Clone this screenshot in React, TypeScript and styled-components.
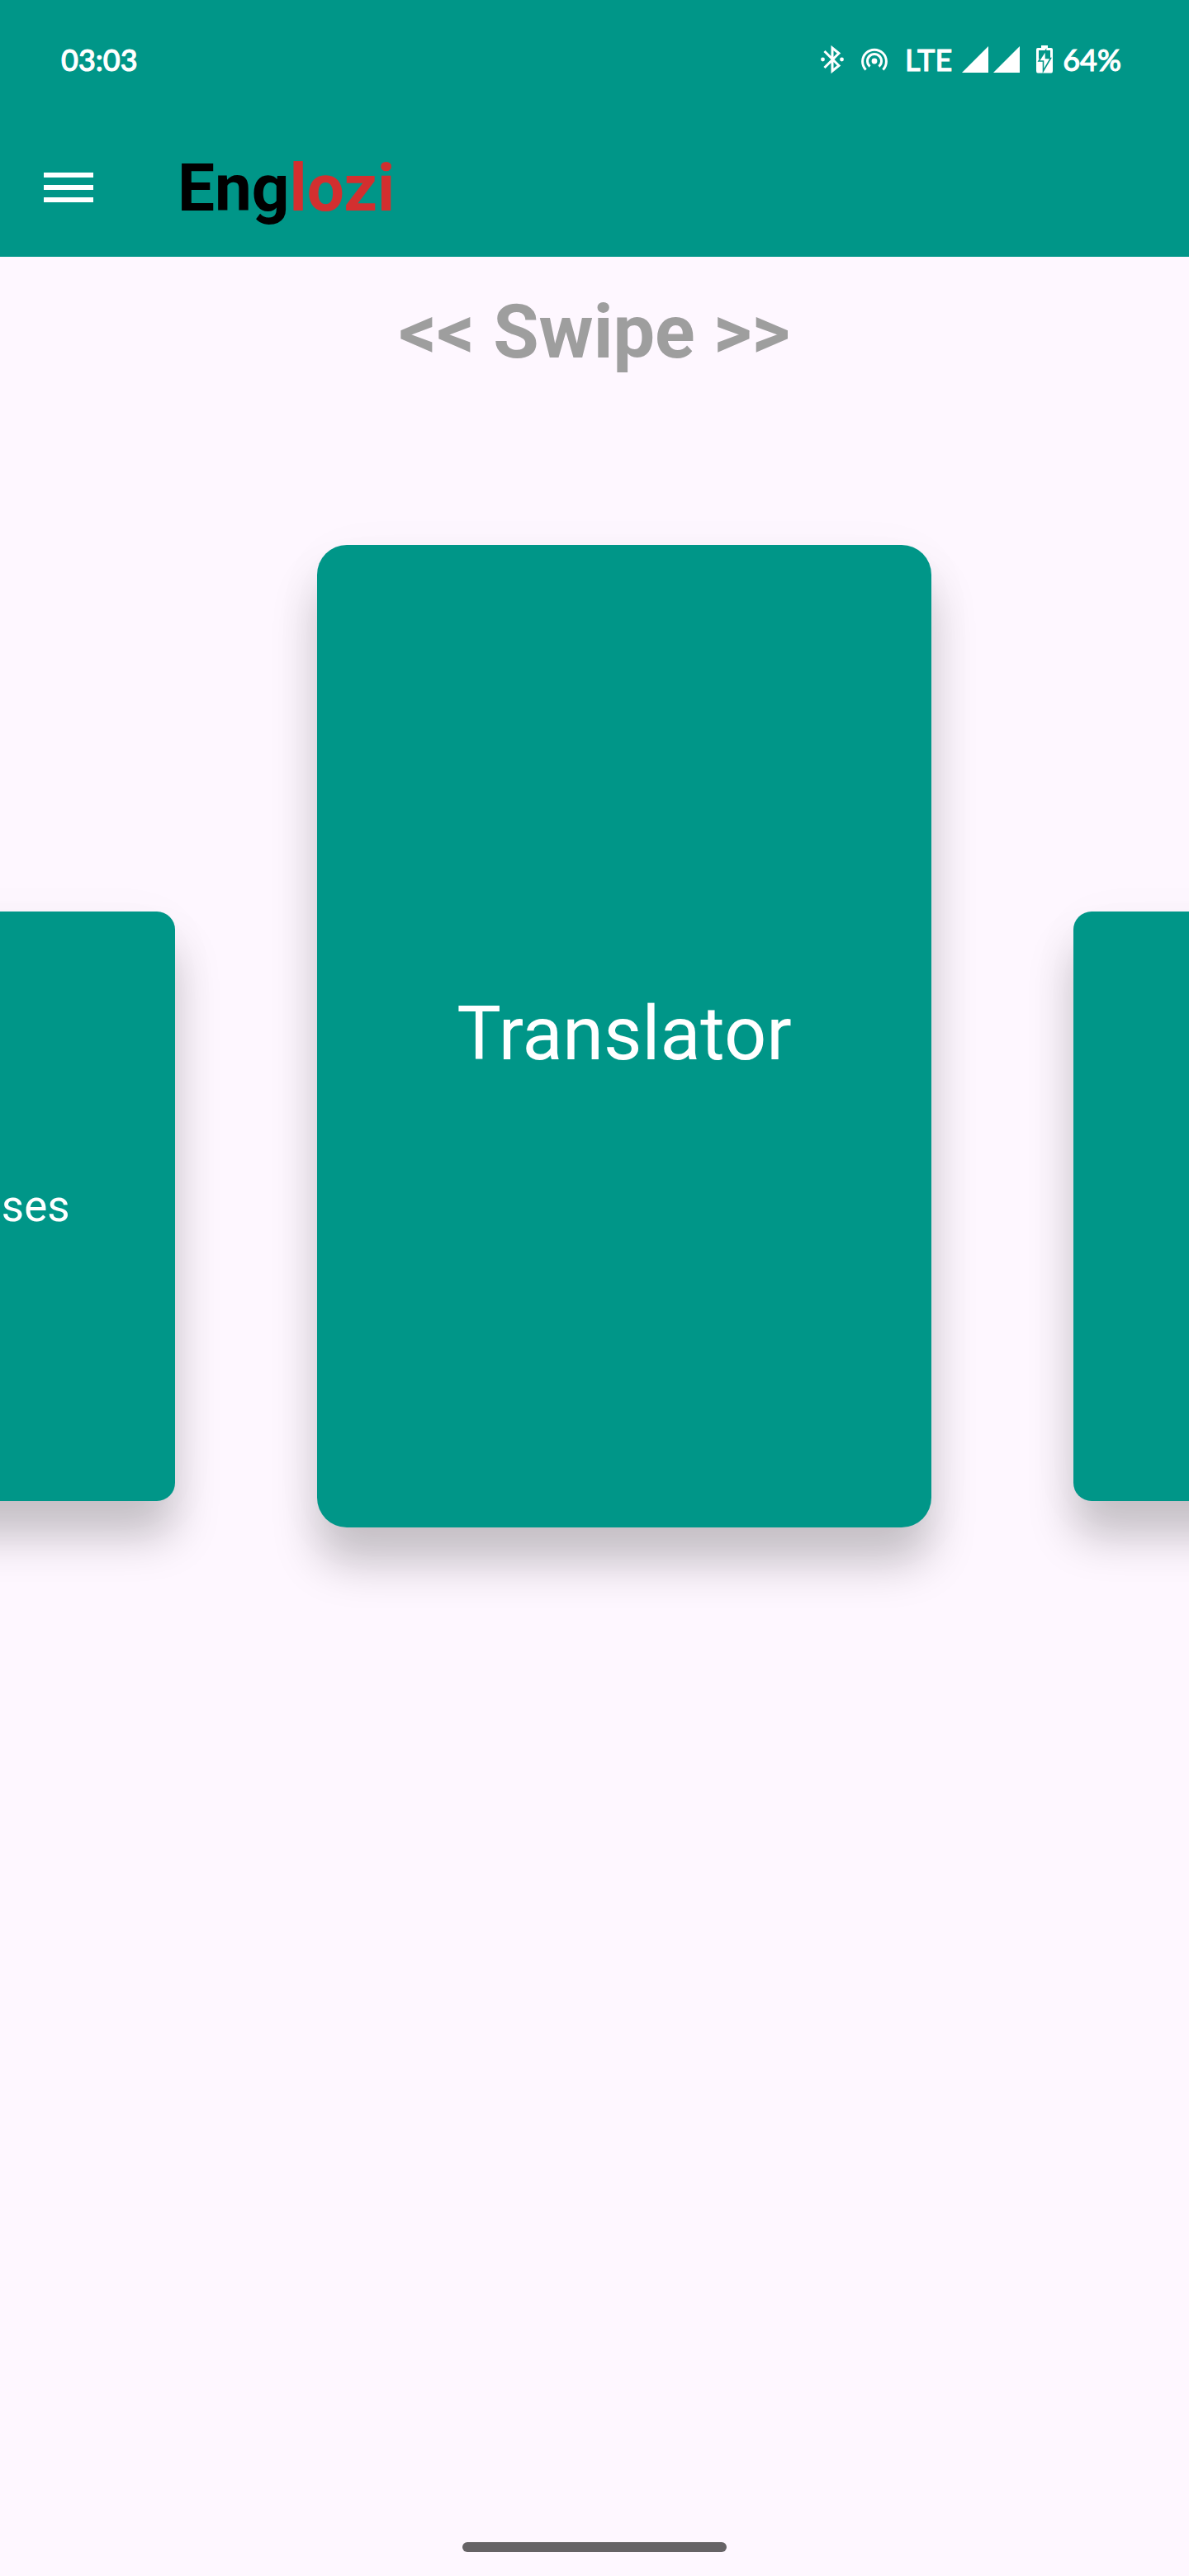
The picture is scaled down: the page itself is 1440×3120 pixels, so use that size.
import React from "react";
import styled, { createGlobalStyle } from "styled-components";

const teal = "#009688";
const surface = "#fef7ff";

const GlobalStyle = createGlobalStyle`
  *, *::before, *::after { box-sizing: border-box; }
  body {
    margin: 0;
    background: ${surface};
    font-family: Roboto, "Liberation Sans", sans-serif;
  }
`;

const Screen = styled.div`
  display: flex;
  flex-direction: column;
  min-height: 100vh;
  overflow: hidden;
  background: ${surface};
`;

const Header = styled.header`
  background: ${teal};
`;

const StatusBar = styled.div`
  display: flex;
  align-items: center;
  justify-content: space-between;
  height: 144px;
  padding: 0 82px 0 74px;
  color: #fff;
  font-family: Lato, "Open Sans", sans-serif;
  font-size: 36px;
  font-weight: 500;
  line-height: 44px;
  -webkit-text-stroke: 1px #fff;
`;

const StatusGroup = styled.div<{ $gap: number }>`
  display: flex;
  align-items: center;
  gap: ${({ $gap }) => $gap}px;
`;

const Glyph = styled.svg`
  display: block;
  flex: none;
`;

const AppBar = styled.div`
  display: flex;
  align-items: center;
  gap: 102px;
  height: 167px;
  padding: 0 53px;
`;

const MenuButton = styled.button`
  display: block;
  padding: 0;
  border: 0;
  background: none;
  cursor: pointer;
`;

const Title = styled.h1`
  margin: 0;
  color: #000;
  font-size: 80px;
  font-weight: 700;
  line-height: 94px;
`;

const TitleAccent = styled.span`
  color: #d32f2f;
`;

const Main = styled.main`
  display: flex;
  flex: 1;
  flex-direction: column;
  padding-top: 40px;
`;

const SwipeHint = styled.p`
  margin: 0;
  color: #9e9e9e;
  font-size: 90px;
  font-weight: 700;
  line-height: 104px;
  text-align: center;
`;

const Carousel = styled.section`
  display: flex;
  align-items: flex-end;
  justify-content: center;
  gap: 172px;
  margin-top: 205px;
  padding-left: 72px;
`;

const Card = styled.button<{ $active?: boolean }>`
  display: flex;
  flex: none;
  align-items: center;
  justify-content: center;
  width: ${({ $active }) => ($active ? 744 : 446)}px;
  height: ${({ $active }) => ($active ? 1190 : 714)}px;
  margin-bottom: ${({ $active }) => ($active ? 0 : 32)}px;
  padding: ${({ $active }) => ($active ? "0 0 6px" : "0")};
  border: 0;
  border-radius: ${({ $active }) => ($active ? 36 : 22)}px;
  background: ${teal};
  box-shadow: 0 44px 54px rgba(0, 0, 0, 0.21), 0 12px 72px rgba(0, 0, 0, 0.03);
  color: #fff;
  font-family: inherit;
  font-size: ${({ $active }) => ($active ? 90 : 53)}px;
  font-weight: 400;
  cursor: pointer;
`;

const HomeIndicator = styled.div`
  width: 320px;
  height: 12px;
  margin: 0 auto 29px;
  border-radius: 6px;
  background: #666366;
`;

const BluetoothIcon = () => (
  <Glyph width="28" height="34" viewBox="0 0 28 34" fill="none" stroke="#fff" strokeWidth="3" aria-hidden="true">
    <path d="M4.5 7 L22 24.5 L14 31 V3 L22 9.5 L4.5 27" />
    <circle cx="2.5" cy="17" r="2.4" fill="#fff" stroke="none" />
    <circle cx="25.5" cy="17" r="2.4" fill="#fff" stroke="none" />
  </Glyph>
);

const HotspotIcon = () => (
  <Glyph width="32" height="32" viewBox="0 0 32 32" fill="none" stroke="#fff" strokeWidth="3" aria-hidden="true">
    <circle cx="16" cy="18" r="3.4" fill="#fff" stroke="none" />
    <path d="M10.6 24.5 A8.5 8.5 0 1 1 21.4 24.5" />
    <path d="M5.6 28.5 A14.4 14.4 0 1 1 26.4 28.5" />
  </Glyph>
);

const SignalIcon = () => (
  <Glyph width="32" height="32" viewBox="0 0 32 32" fill="#fff" aria-hidden="true">
    <path d="M0 32 L32 0 V32 Z" />
  </Glyph>
);

const BatteryIcon = () => (
  <Glyph width="20" height="34" viewBox="0 0 20 34" aria-hidden="true">
    <path d="M6 0 H14 V3 H18 Q20 3 20 5 V31 Q20 33.5 18 33.5 H2 Q0 33.5 0 31 V5 Q0 3 2 3 H6 Z" fill="#fff" />
    <path d="M3 6 H17 V16 H3 Z" fill={teal} />
    <path
      d="M11.5 6 L3 19 H8.5 V31 L17.5 15.5 H11.5 Z"
      fill="#fff"
      stroke={teal}
      strokeWidth="1.6"
    />
  </Glyph>
);

const MenuIcon = () => (
  <Glyph width="60" height="38" viewBox="0 0 60 38" fill="#fff" aria-hidden="true">
    <path d="M0 0 H60 V6 H0 Z M0 15 H60 V21 H0 Z M0 30 H60 V36 H0 Z" />
  </Glyph>
);

export default function App() {
  return (
    <Screen>
      <GlobalStyle />
      <Header>
        <StatusBar>
          <span>03:03</span>
          <StatusGroup $gap={20}>
            <StatusGroup $gap={12}>
              <StatusGroup $gap={21}>
                <BluetoothIcon />
                <HotspotIcon />
                <span>LTE</span>
              </StatusGroup>
              <StatusGroup $gap={6}>
                <SignalIcon />
                <SignalIcon />
              </StatusGroup>
            </StatusGroup>
            <StatusGroup $gap={12}>
              <BatteryIcon />
              <span>64%</span>
            </StatusGroup>
          </StatusGroup>
        </StatusBar>
        <AppBar>
          <MenuButton type="button" aria-label="Open menu">
            <MenuIcon />
          </MenuButton>
          <Title>
            Eng<TitleAccent>lozi</TitleAccent>
          </Title>
        </AppBar>
      </Header>
      <Main>
        <SwipeHint>&lt;&lt; Swipe &gt;&gt;</SwipeHint>
        <Carousel>
          <Card type="button">Phrases</Card>
          <Card type="button" $active>
            Translator
          </Card>
          <Card type="button" aria-label="Next card" />
        </Carousel>
      </Main>
      <HomeIndicator />
    </Screen>
  );
}
